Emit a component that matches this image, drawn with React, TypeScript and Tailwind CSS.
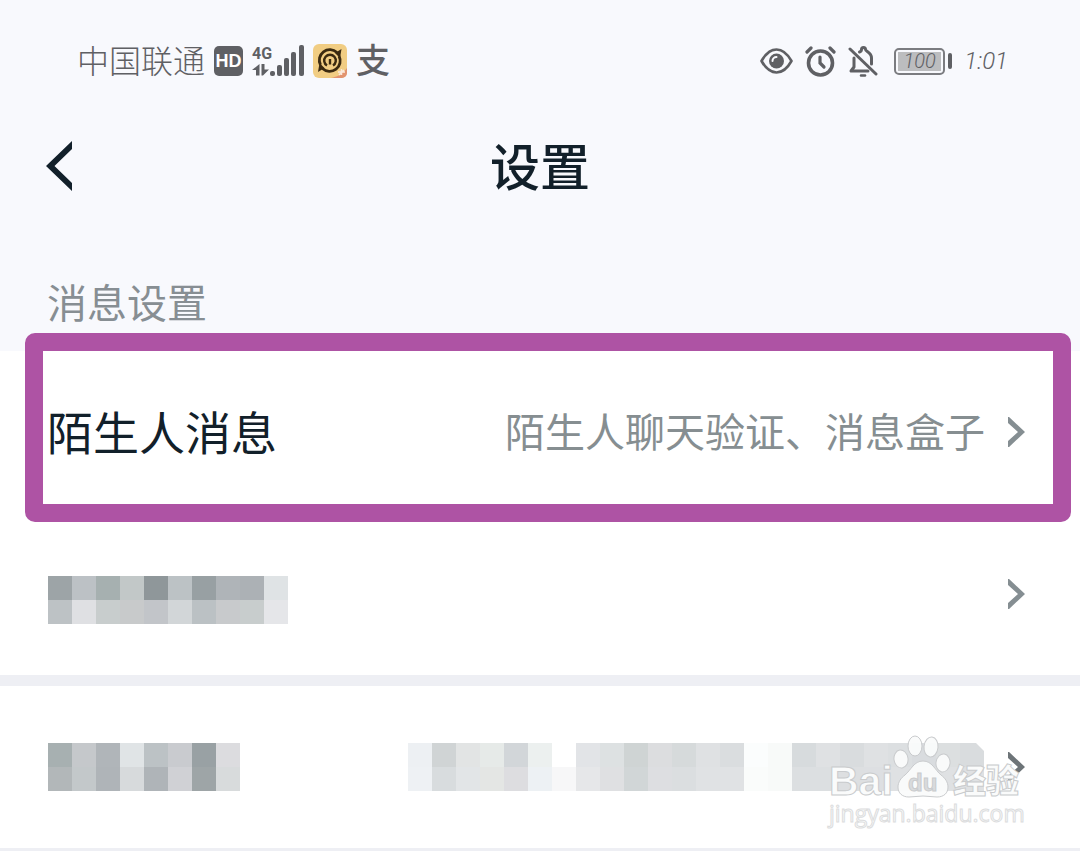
const labelMosaic = [
  ["#9da4a7", "#bcc1c5", "#a6b0b0", "#c2c8c8", "#8f979a", "#bcc2c5", "#98a0a3", "#afb4b8", "#acb1b5", "#dfe3e5"],
  ["#bdc2c5", "#dfe0e3", "#c8cdcd", "#c8cacb", "#c2c5c9", "#d2d6d8", "#bbc1c4", "#c8cacc", "#c8cdcd", "#e5e6e9"],
];

const secondLabelMosaic = [
  ["#a7b0b1", "#c5c8cb", "#b0b5b9", "#e0e4e6", "#bcc2c5", "#c9cbcf", "#99a1a4", "#dcdcdf"],
  ["#b2b7b9", "#c3c8ca", "#afb4b8", "#d7dadc", "#afb4b8", "#d0d1d5", "#9ea5a7", "#d8dbdc"],
];

const valueMosaic = [
  [
    "#edf0f3", "#d0d4d5", "#e2e4e4", "#e6eae8", "#d2d6d9", "#ecf0ef", "#ffffff", "#e2e4e7",
    "#dde1e2", "#cfd4d4", "#dcdddf", "#d6dadb", "#dfe1e3", "#dadddf", "#fbfdfd", "#f8faf9",
    "#d7dbdd", "#dfe1e3", "#d9dcde", "#dfe1e3", "#dcdfe1", "#d9dcdf", "#dcdfe0", "#d9dcde",
  ],
  [
    "#eef1f4", "#d8dcde", "#e2e5e7", "#e4e6e4", "#dddde0", "#edf1f4", "#f7f7f8", "#e6e7e9",
    "#dfe0e2", "#d1d6d7", "#dddee1", "#dbdee0", "#e0e2e4", "#e0e2e4", "#fafcfb", "#f8faf9",
    "#dcdfe1", "#dcdfe1", "#dddfe1", "#dddfe2", "#dfe1e3", "#dddfe1", "#dfe1e3", "#dfe1e3",
  ],
];

const Mosaic = ({ rows }: { rows: string[][] }) => (
  <div aria-hidden="true">
    {rows.map((row, i) => (
      <div key={i} className="flex">
        {row.map((color, j) => (
          <span key={j} className="size-6" style={{ backgroundColor: color }} />
        ))}
      </div>
    ))}
  </div>
);

const Chevron = ({ className }: { className: string }) => (
  <svg className={className} width="17" height="30" viewBox="0 0 17 30" fill="currentColor">
    <path d="M0 -1 17 15 0 31V24L10 15 0 6Z" />
  </svg>
);

const StatusBar = () => (
  <div className="flex items-center justify-between pt-10 pl-[77px] pr-[72px] text-[#5f6064]">
    <div className="flex items-center gap-[9px]">
      <span className="pb-1 text-[32px] leading-[38px] font-light">中国联通</span>
      <span className="flex h-[30px] w-[29px] items-center justify-center rounded-[5px] bg-[#5f6064] font-['Liberation_Sans'] text-[18px] font-bold text-white">
        HD
      </span>
      <div className="flex items-end">
        <div className="flex w-[18px] flex-col">
          <span className="font-['Roboto'] text-[16px] leading-[18px] font-bold">4G</span>
          <svg width="18" height="14" viewBox="0 0 18 14" fill="currentColor">
            <path d="M7.500 1v11.500H4V7H0ZM9.500 1h3v5.500H17L11 12.500H9.500Z" />
          </svg>
        </div>
        <svg width="34" height="32" viewBox="0 0 34 32" fill="currentColor">
          <rect x="0" y="26" width="5" height="5" rx="2" />
          <rect x="7" y="20" width="5" height="11" rx="2" />
          <rect x="14" y="13" width="5" height="18" rx="2" />
          <rect x="21" y="7" width="5" height="24" rx="2" />
          <rect x="29" y="0" width="5" height="31" rx="2" />
        </svg>
      </div>
      <svg width="34" height="34" viewBox="0 0 34 34" fill="none">
        <rect width="34" height="34" rx="6" fill="#f1cd83" />
        <path d="M34 24v5a5 5 0 0 1-5 5H18c6-1 12-4 16-10Z" fill="#e2936f" />
        <g stroke="#3b2a10" strokeWidth="2.800">
          <path d="M7.500 21A10.500 10.500 0 0 1 24 8.500" />
          <path d="M26 12A10.500 10.500 0 0 1 9.500 24.500" />
          <path d="M14 21.500A5.800 5.800 0 1 1 20 21.500" strokeWidth="2.400" />
          <path d="M17 15v5.500" strokeWidth="2.400" />
        </g>
        <path d="M22 9l6.500-4-1.500 9ZM11.500 24 5 28l1.500-9Z" fill="#3b2a10" />
        <path d="M25 28h7M28.500 25v6M26 31l5-5" stroke="#fbe9dc" strokeWidth="1.500" />
      </svg>
      <span className="pb-1 text-[34px] leading-[38px] font-medium">支</span>
    </div>

    <div className="flex items-center gap-3">
      <svg width="33" height="28" viewBox="0 0 33 28" fill="none" stroke="currentColor">
        <path d="M1.500 14C6 6 11 2.500 16.500 2.500S27 6 31.500 14C27 22 22 25.500 16.500 25.500S6 22 1.500 14Z" strokeWidth="2.600" strokeLinejoin="round" />
        <circle cx="16.500" cy="14" r="7.500" fill="currentColor" stroke="none" />
        <path d="M12.500 14a4 4 0 0 1 4-4" stroke="#f8f9fd" strokeWidth="2" strokeLinecap="round" />
      </svg>
      <svg width="31" height="31" viewBox="0 0 31 31" fill="none" stroke="currentColor" strokeLinecap="round">
        <circle cx="15.500" cy="17" r="12" strokeWidth="3.600" />
        <path d="M15 11v6l4 4" strokeWidth="3.200" />
        <path d="M2 6 6 2M29 6 25 2" strokeWidth="3.200" />
      </svg>
      <svg width="30" height="31" viewBox="0 0 30 31" fill="none" stroke="currentColor" strokeLinecap="round">
        <path d="M2 3 28 28" strokeWidth="3" />
        <path d="M6 12v9l-3 4h17" strokeWidth="3" strokeLinejoin="round" />
        <path d="M11.500 6C13 5.500 13.500 5 13.500 3.500a2 2 0 0 1 4 0C17.500 5.500 23.500 6 23.500 12v6" strokeWidth="3" strokeLinejoin="round" />
        <path d="M13 29.500h4" strokeWidth="2.500" />
      </svg>
      <div className="flex items-center gap-[3px] pl-1">
        <div className="rounded-[5px] border-2 border-[#7b7c80] p-[2px]">
          <div className="flex h-[19px] w-[43px] items-center justify-center bg-[#bcbdbf] font-['Roboto'] text-[20px] font-light italic">
            100
          </div>
        </div>
        <span className="h-4 w-1 rounded-full bg-[#5f6064]" />
      </div>
      <span className="font-['Roboto'] text-[24px] leading-[42px] font-light italic">1:01</span>
    </div>
  </div>
);

const Watermark = () => (
  <svg
    className="pointer-events-none absolute right-[50px] bottom-4"
    width="210"
    height="102"
    viewBox="0 0 210 102"
    fill="#fafbfb"
    stroke="#c9cbcd"
    strokeWidth="1"
  >
    <g fillOpacity="0.950">
      <ellipse cx="81" cy="29" rx="7" ry="9" transform="rotate(-8 81 29)" />
      <ellipse cx="95" cy="16" rx="7" ry="10" />
      <ellipse cx="111" cy="17" rx="7" ry="10" transform="rotate(6 111 17)" />
      <ellipse cx="123" cy="33" rx="7" ry="9" transform="rotate(8 123 33)" />
      <path d="M103 31c9 0 12 9 18 14 4 3 7 7 7 12 0 6-4 10-11 10-5 0-9-1-14-1s-9 1-14 1c-7 0-11-4-11-10 0-5 3-9 7-12 6-5 9-14 18-14Z" />
    </g>
    <text x="9" y="65" className="font-['Liberation_Sans'] text-[41px] font-bold">
      Bai
    </text>
    <text x="88" y="61" fill="#d9dbdd" className="font-['Liberation_Sans'] text-[24px] font-bold">
      du
    </text>
    <text x="133" y="63" className="font-['Noto_Sans_CJK_SC'] text-[33px] font-black">
      经验
    </text>
    <text x="9" y="92" stroke="#dcddde" className="font-['Open_Sans'] text-[23px]">
      jingyan.baidu.com
    </text>
  </svg>
);

const App = () => {
  return (
    <div className="min-h-screen overflow-x-hidden bg-white font-['Noto_Sans_CJK_SC',sans-serif] text-[#12202a]">
      <header className="bg-[#f8f9fd]">
        <StatusBar />
        <div className="grid grid-cols-3 items-center pt-11 pr-[46px] pl-[46px]">
          <button aria-label="返回" className="justify-self-start">
            <svg width="26" height="50" viewBox="0 0 26 50" fill="currentColor">
              <path d="M26 0V8L8.500 25 26 42V50L0 25Z" />
            </svg>
          </button>
          <h1 className="pb-1 text-center text-[50px] leading-[76px] font-medium">设置</h1>
        </div>
        <h2 className="px-[47px] pt-[65px] pb-5 text-[40px] leading-[60px] font-normal text-[#878e93]">消息设置</h2>
      </header>

      <main>
        <button className="relative flex h-[162px] w-full items-center pr-[55px] pl-[47px] text-left">
          <span className="flex-1 pb-1 text-[46px] leading-[60px]">陌生人消息</span>
          <span className="pb-1 text-[40px] leading-[60px] text-[#868e91]">陌生人聊天验证、消息盒子</span>
          <Chevron className="ml-[23px] text-[#858e92]" />
          <span className="pointer-events-none absolute -top-[18px] right-[9px] -bottom-[9px] left-[25px] rounded-[10px] border-[18px] border-[#ae53a4]" />
        </button>
        <button aria-label="更多" className="flex h-[162px] w-full items-center justify-between pr-[55px] pl-12">
          <div className="pt-3">
            <Mosaic rows={labelMosaic} />
          </div>
          <Chevron className="text-[#858e92]" />
        </button>
        <div className="h-[11px] bg-[#eeeff4]" />
        <div className="relative border-b-[3px] border-[#eeeff4]">
          <button aria-label="更多" className="flex h-[162px] w-full items-center pr-[55px] pl-12">
            <div className="flex-1">
              <Mosaic rows={secondLabelMosaic} />
            </div>
            <div className="[clip-path:polygon(0_0,calc(100%-8px)_0,100%_8px,100%_100%,0_100%)]">
              <Mosaic rows={valueMosaic} />
            </div>
            <Chevron className="ml-6 text-[#6d7478]" />
          </button>
          <Watermark />
        </div>
      </main>
    </div>
  );
};

export default App;
